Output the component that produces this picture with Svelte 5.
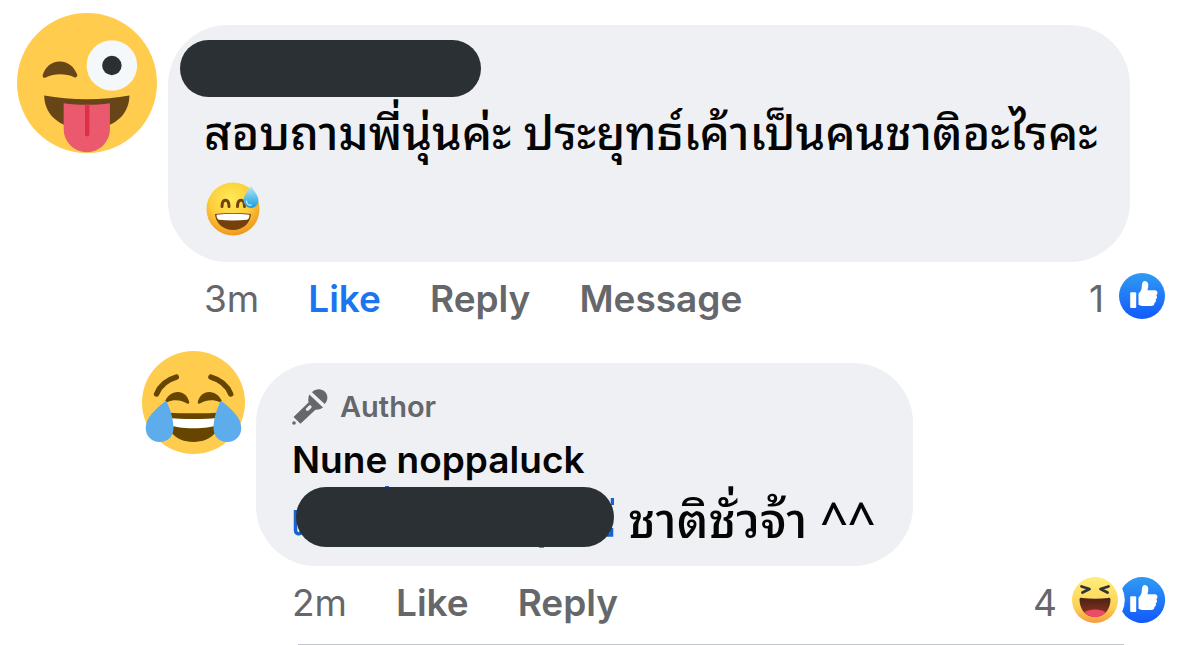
<script>
  let liked = $state(true);
  let replyLiked = $state(false);
</script>

{#snippet thumb(id, notched)}
  <svg class="reaction" viewBox="0 0 46 46" role="img" aria-label="Like">
    <defs>
      <linearGradient id={id} x1="0" y1="0" x2="0" y2="1">
        <stop offset="0" stop-color="#309bf2" />
        <stop offset="1" stop-color="#1259fb" />
      </linearGradient>
    </defs>
    {#if notched}
      <path fill="url(#{id})" d="M3.2 11.5A23 23 0 1 1 3.2 34.5A28 28 0 0 0 3.2 11.5Z" />
    {:else}
      <circle cx="23" cy="23" r="23" fill="url(#{id})" />
    {/if}
    <rect x="11.2" y="19.3" width="6" height="15.8" rx="1" fill="#fff" />
    <path
      fill="#fff"
      d="M19.5 20.5c2.6-2.100 3.200-4.500 3.300-7 0-3.400 1.200-5.400 3.100-5.400 2.500 0 3.600 2.200 3.400 4.700-.1 1.600-.6 3-.9 4.500h7.200c2.200 0 3.200 1.400 2.800 3.100-.2.900-.8 1.500-1.100 1.900.7.800.9 2.100.3 3.100-.3.600-.7.900-1 1.100.4.800.5 1.800-.1 2.600-.3.500-.7.800-1.100 1 .2 1.900-1.200 3-3.400 3h-6.800c-2.400 0-4.100-.4-5.700-1.300z"
    />
  </svg>
{/snippet}

<main>
  <article class="comment">
    <svg class="avatar" viewBox="0 0 36 36" role="img" aria-label="Winking face with tongue">
      <circle cx="18" cy="18" r="18" fill="#ffcc4d" />
      <path fill="#664517" d="M7 21.2c3.4.6 7 1 11 1s7.600-.4 10.900-1c0 4.200-3 8.600-10.900 8.600S7 25.400 7 21.200Z" />
      <path fill="#ea596e" d="M12 23.200c2 .3 4 .4 6 .4s4-.1 5.900-.4v6.600a5.950 6 0 0 1-11.900 0Z" />
      <path fill="#dd2f45" d="M17.500 23.500h1.100v7.700a.55.55 0 0 1-1.100 0Z" />
      <circle cx="24.400" cy="13.500" r="6.500" fill="#f5f8fa" />
      <circle cx="24.400" cy="13.500" r="2.500" fill="#292f33" />
      <path fill="#664517" d="M6.600 16c.7-2.100 2.200-3.500 4.400-3.500s3.700 1.400 4.500 3.400c.1.500-.4.800-.8.600-2.300-1-5.100-1-7.300.1-.5.200-.9-.1-.8-.6Z" />
    </svg>
    <div class="body">
      <div class="bubble first">
        <span class="redacted"></span>
        <p>สอบถามพี่นุ่นค่ะ ประยุทธ์เค้าเป็นคนชาติอะไรคะ</p>
        <svg class="sweat" viewBox="0 0 54 54" role="img" aria-label="Grinning face with sweat">
          <defs>
            <radialGradient id="face" cx=".45" cy=".32" r=".68">
              <stop offset="0" stop-color="#ffeb57" />
              <stop offset=".55" stop-color="#fdcf3c" />
              <stop offset="1" stop-color="#ef971e" />
            </radialGradient>
            <linearGradient id="drop" x1="0" y1="0" x2="0" y2="1">
              <stop offset="0" stop-color="#b8e9fa" />
              <stop offset="1" stop-color="#169bdc" />
            </linearGradient>
          </defs>
          <circle cx="27" cy="27" r="26.500" fill="url(#face)" />
          <path d="M16 24.500c0-8.500 7-8.500 7 0M31.500 24.500c0-8.500 7-8.500 7 0" fill="none" stroke="#75400c" stroke-width="3" stroke-linecap="round" />
          <path fill="#75400c" d="M9 32c12-1.500 24-1.500 36 0-.5 9-8 16-18 16S9.500 41 9 32Z" />
          <path fill="#fff" d="M10.500 32.800c11-1.300 22-1.300 33 0 0 3-1 4.700-2.500 5-9 .8-19 .8-28 0-1.500-.3-2.500-2-2.500-5Z" />
          <path fill="url(#drop)" d="M45 4c3 5 7.500 10 7.500 14.500a7.500 7.500 0 0 1-15 0C37.500 14 42 9 45 4Z" />
          <path fill="none" stroke="#c8f1fd" stroke-width="1.200" stroke-linecap="round" d="M40.500 19c0 3 2 4.600 5 4" />
        </svg>
      </div>
      <footer>
        <time>3m</time>
        <button class:liked onclick={() => (liked = !liked)}>Like</button>
        <button>Reply</button>
        <button>Message</button>
        <span class="count">1</span>
        {@render thumb('blue-a', false)}
      </footer>
    </div>
  </article>

  <article class="comment reply">
    <svg class="avatar" viewBox="0 0 36 36" role="img" aria-label="Face with tears of joy">
      <circle cx="18" cy="18" r="18" fill="#ffcc4d" />
      <path fill="none" stroke="#664500" stroke-width="1.900" stroke-linecap="round" d="M5.100 15c1.200-3 3.700-5 6.900-5.900M31 15c-1.200-3-3.700-5-6.900-5.900" />
      <path fill="#664500" d="M8.100 17.500c.9-2 2.400-3.200 4.400-3.200 2.100 0 3.500 1.500 4 3.500.1.600-.4.800-.9.500-2.100-1.300-4.600-1.400-6.800-.4ZM27.900 17.500c-.9-2-2.400-3.200-4.400-3.200-2.100 0-3.500 1.500-4 3.500-.1.600.4.800.9.500 2.100-1.300 4.600-1.400 6.800-.4Z" />
      <path fill="#664500" d="M7.900 21.500c6.700.4 13.500.4 20.200 0 0 5.700-3.600 10.300-10.100 10.300S7.900 27.200 7.900 21.500Z" />
      <path fill="#fff" d="M8 23.200c6.700.8 13.300.8 20 0v2.300c-5.500 2-14.500 2-20 0Z" />
      <path fill="#5dadec" d="M8.400 17.400c1.300 2.500 2.600 6 2.600 9.500 0 3-2 4.900-4.800 4.900s-4.900-2-4.900-4.900c0-3.800 3.800-7 7.100-9.500ZM27.600 17.400c-1.300 2.500-2.600 6-2.600 9.500 0 3 2 4.900 4.800 4.900s4.900-2 4.900-4.900c0-3.800-3.800-7-7.100-9.500Z" />
    </svg>
    <div class="body">
      <div class="bubble second">
        <div class="author">
          <svg class="mic" viewBox="0 0 36 36" aria-hidden="true">
            <path fill="#65676b" d="M20 3.200C24-.8 30-.3 33 2.800s3.400 8.300-.3 12.200Z" />
            <path fill="#65676b" fill-rule="evenodd" d="M17.300 5.500 31 18.500c-2.300 2-5.200 2.300-7.600 2.200L8.500 34.800 1.500 28 16.500 13.500c-.3-2.700-.3-5.300.8-8ZM14.300 19.200c-1.500 1.500.8 3.600 2.300 2.200l2.600-2.500c1.500-1.500-.8-3.700-2.300-2.200Z" />
            <circle cx="2" cy="34" r="1.800" fill="#65676b" />
          </svg>
          <span>Author</span>
        </div>
        <strong>Nune noppaluck</strong>
        <div class="line">
          <svg class="mention" viewBox="0 0 322 62" role="img" aria-label="Hidden name">
            <path fill="none" stroke="#1763cf" stroke-width="3.500" d="M3.500 24v20c0 6 8 4 5 0M320.500 12v7M319.500 42v7h-8M247 60h5M93 1.500h4" />
            <rect x="4" y="1" width="318" height="60" rx="30" fill="#2b3035" />
          </svg>
          <span>ชาติชั่วจ้า ^^</span>
        </div>
      </div>
      <footer>
        <time>2m</time>
        <button class:liked={replyLiked} onclick={() => (replyLiked = !replyLiked)}>Like</button>
        <button>Reply</button>
        <span class="count">4</span>
        <span class="stack">
          <svg class="reaction" viewBox="0 0 46 46" role="img" aria-label="Haha">
            <defs>
              <linearGradient id="haha" x1="0" y1="0" x2="0" y2="1">
                <stop offset="0" stop-color="#ffee7a" />
                <stop offset=".65" stop-color="#fdd257" />
                <stop offset="1" stop-color="#f79b3e" />
              </linearGradient>
              <linearGradient id="mouth" x1="0" y1="0" x2="0" y2="1">
                <stop offset="0" stop-color="#482314" />
                <stop offset="1" stop-color="#9a3425" />
              </linearGradient>
            </defs>
            <circle cx="23" cy="23" r="23" fill="url(#haha)" />
            <path fill="url(#mouth)" d="M7.500 22.500c0-1.300 1-1.800 2.500-1.600 9 1 18 1 26 0 1.500-.2 2.500.3 2.500 1.600 0 9-5.500 17.500-15.500 17.500S7.500 31.500 7.500 22.500Z" />
            <path fill="#ec4b65" d="M12.500 35c4.500-3.500 16.500-3.500 21 0-2.500 3.200-6 5-10.500 5s-8-1.800-10.500-5Z" />
            <path fill="none" stroke="#343331" stroke-width="2.800" stroke-linecap="round" stroke-linejoin="round" d="M9.500 9.500 17.500 12l-7 3.500M36.500 9.500l-8 2.500 7 3.500" />
          </svg>
          {@render thumb('blue-b', true)}
        </span>
      </footer>
    </div>
  </article>
  <hr />
</main>

<style>
  :global(body) {
    margin: 0;
    background: #fff;
    overflow: hidden;
  }
  main {
    padding: 13px 35px 0 17px;
    color: #050505;
    font-family: Inter, 'Noto Sans', sans-serif;
  }
  .comment {
    display: flex;
    align-items: flex-start;
    gap: 11px;
  }
  .reply {
    padding: 21px 0 0 125px;
  }
  .avatar {
    flex: none;
    width: 140px;
    height: 140px;
  }
  .reply .avatar {
    width: 103px;
    height: 103px;
  }
  .body {
    flex: 1;
    min-width: 0;
    padding-top: 12px;
  }
  .bubble {
    box-sizing: border-box;
    background: #eff0f4;
    border-radius: 60px;
  }
  .first {
    margin-right: 35px;
    padding: 15px 12px 26px;
  }
  .redacted {
    display: block;
    width: 301px;
    height: 57px;
    border-radius: 29px;
    background: #2b3035;
  }
  p,
  .line {
    font-family: 'Noto Sans Thai Looped', Loma, Garuda, Waree, 'Noto Sans Thai', Inter, sans-serif;
    font-size: 49px;
    font-weight: 500;
    white-space: nowrap;
  }
  p {
    margin: 0;
    padding: 0 24px;
    font-size: 47px;
    line-height: 64px;
  }
  .sweat {
    display: block;
    width: 54px;
    height: 54px;
    margin: 21px 0 0 26px;
  }
  .second {
    width: fit-content;
    padding: 24px 38px 18px 36px;
  }
  .author {
    display: flex;
    align-items: center;
    gap: 12px;
    color: #65676b;
    font-size: 29px;
    font-weight: 600;
    line-height: 40px;
  }
  .mic {
    width: 36px;
    height: 36px;
  }
  strong {
    display: block;
    padding-top: 6px;
    font-size: 37px;
    font-weight: 600;
    line-height: 53px;
  }
  .line {
    display: flex;
    align-items: center;
    gap: 14px;
    line-height: 60px;
  }
  .mention {
    width: 322px;
    height: 62px;
  }
  .line span {
    padding-bottom: 2px;
  }
  footer {
    display: flex;
    align-items: center;
    height: 46px;
    padding: 11px 0 11px 36px;
    color: #65676b;
    font-size: 37px;
  }
  .reply footer {
    padding-bottom: 0;
  }
  time {
    margin-right: 49px;
  }
  button {
    margin: 0 49px 0 0;
    padding: 0;
    border: 0;
    background: none;
    color: #65676b;
    font: inherit;
    font-weight: 600;
    cursor: pointer;
  }
  time,
  button,
  .count {
    padding-top: 4px;
  }
  .liked {
    color: #1b74f0;
  }
  .count {
    margin: 0 15px 0 auto;
  }
  .reaction {
    display: block;
    flex: none;
    width: 46px;
    height: 46px;
  }
  .stack {
    display: flex;
    gap: 1px;
  }
  hr {
    height: 2px;
    margin: 21px 41px 0 281px;
    border: 0;
    background: #c4c5c8;
  }
</style>
